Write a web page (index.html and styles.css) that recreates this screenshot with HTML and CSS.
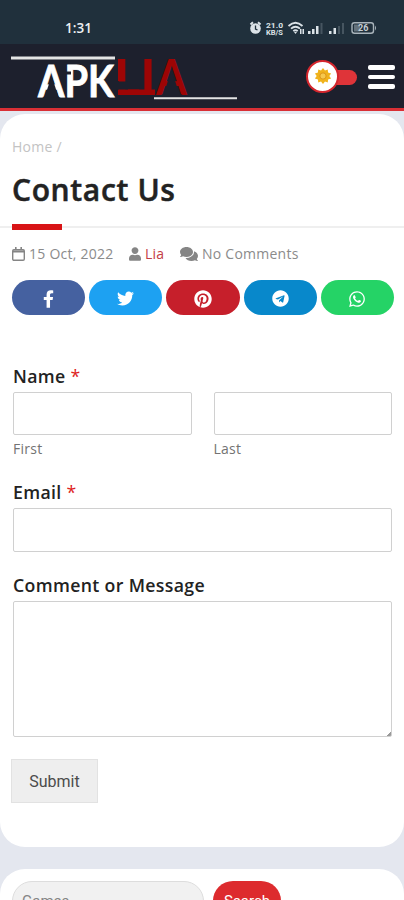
FILE: index.html
```html
<!DOCTYPE html>
<html lang="en">
<head>
<meta charset="utf-8">
<meta name="viewport" content="width=device-width, initial-scale=1">
<title>Contact Us</title>
<link rel="stylesheet" href="styles.css">
</head>
<body>
<div class="status">
  <span class="time">1:31</span>
  <svg class="status-icons" viewBox="0 0 132 16" width="132" height="16">
    <g fill="#dce3e8">
      <path d="M1.500 4.500 4 2.300M11.500 4.500 9 2.300" stroke="#dce3e8" stroke-width="2"/>
      <circle cx="6.500" cy="8.500" r="5.300"/>
      <path d="M6.500 5.500V9l2 1" fill="none" stroke="#20303c" stroke-width="1.300"/>
      <text x="17" y="7.500" class="speed" textLength="17" lengthAdjust="spacingAndGlyphs">21.0</text>
      <text x="17" y="15" class="speed" textLength="17" lengthAdjust="spacingAndGlyphs">KB/S</text>
      <path d="M39.500 6Q46.500-.5 53.500 6M42 8.700q4.500-4 9 0M44.300 11.200q2.200-2 4.400 0" fill="none" stroke="#dce3e8" stroke-width="1.800"/>
      <path d="m45 12 1.500 2 1.500-2zM51 9h1.500v5H51zM53.500 9H55v5h-1.500z"/>
      <path d="M59 11h2.500v3H59zM63 9h2.500v5H63zM67 6h2.500v8H67zM80 11h2.500v3H80zM84.500 8h2.500v6h-2.500z"/>
      <path fill="#465560" d="M71.500 3h2v11h-2zM89 6h2v8h-2zM93 3h2v11h-2z"/>
    </g>
    <rect x="103" y="2.700" width="21.500" height="10.600" rx="2.500" fill="none" stroke="#a9b4bb" stroke-width="1.400"/>
    <rect x="105" y="4.500" width="6" height="7" fill="#64727c"/>
    <path d="M126 5.500q2 2.500 0 5z" fill="#a9b4bb"/>
    <text x="109" y="11.300" class="battery">26</text>
  </svg>
</div>
<header class="header">
  <svg class="logo" viewBox="0 0 240 60" width="240" height="60" role="img" aria-label="APK LIA">
    <path d="M11 11h104" stroke="#e4e4e4" stroke-width="3"/>
    <text x="38" y="49.500" class="logo-text" textLength="76" lengthAdjust="spacingAndGlyphs">APK</text>
    <path d="M44.500 50.500 51.600 29 58.700 50.500z" fill="#1d202d"/>
    <path d="M62 24.500h9v3h-9z" fill="#1d202d"/>
    <g fill="#9d0505">
      <text x="115" y="48" class="logo-tall" textLength="25" lengthAdjust="spacingAndGlyphs">L</text>
      <text x="141" y="48" class="logo-tall" textLength="14" lengthAdjust="spacingAndGlyphs">I</text>
      <text x="156" y="48" class="logo-tall" textLength="31" lengthAdjust="spacingAndGlyphs">A</text>
      <path d="M118 12h7v22h-7zM144.500 12h7v32h-7zM118 42.500h37V48h-37z"/>
    </g>
    <path d="M116 34.500h12v8h-12z" fill="#1d202d"/>
    <path d="M163 49 171.500 23 180 49z" fill="#1d202d"/>
    <path d="M154 51.300h83" stroke="#e4e4e4" stroke-width="2"/>
  </svg>
  <div class="actions">
    <div class="switch">
      <span class="knob">
        <svg viewBox="-10 -10 20 20" width="18" height="18">
          <path fill="#f0b21b" d="M0-9 2.200-6 5.300-7.300 5.600-4 9-2.900 7 0 9 2.900 5.600 4 5.300 7.300 2.200 6 0 9-2.200 6-5.300 7.300-5.600 4-9 2.900-7 0-9-2.900-5.600-4-5.300-7.300-2.200-6z"/>
          <circle r="3.500" fill="#f6c84d" stroke="#d99013"/>
        </svg>
      </span>
    </div>
    <div class="menu"><i></i><i></i><i></i></div>
  </div>
</header>
<main class="card">
  <nav class="crumbs">Home /</nav>
  <h1>Contact Us</h1>
  <div class="rule"></div>
  <div class="meta">
    <span class="date"><svg viewBox="0 0 13 14" width="13" height="14" fill="none" stroke="#858585"><rect x=".7" y="2.700" width="11.600" height="10.600" rx="1.200" stroke-width="1.400"/><path d="M1 4.500h11" stroke-width="2"/><path d="M3.800 0v3M9.200 0v3" stroke-width="1.600"/></svg><b>15 Oct, 2022</b></span>
    <span class="author"><svg viewBox="0 0 448 512" width="12" height="14"><path d="M224 256c70.700 0 128-57.300 128-128S294.700 0 224 0 96 57.300 96 128s57.300 128 128 128zm89.600 32h-16.700c-22.200 10.200-46.900 16-72.900 16s-50.600-5.800-72.900-16h-16.700C60.200 288 0 348.200 0 422.400V464c0 26.500 21.500 48 48 48h352c26.500 0 48-21.500 48-48v-41.600c0-74.200-60.200-134.400-134.400-134.400z"/></svg><b>Lia</b></span>
    <span class="comments"><svg viewBox="0 0 576 512" width="18" height="16"><path d="M416 192c0-88.400-93.100-160-208-160S0 103.600 0 192c0 34.300 14.100 65.900 38 92-13.400 30.200-35.500 54.200-35.800 54.500-2.200 2.300-2.800 5.700-1.500 8.700S4.800 352 8 352c36.600 0 66.900-12.300 88.700-25 32.200 15.700 70.300 25 111.300 25 114.900 0 208-71.600 208-160zm122 220c23.900-26 38-57.700 38-92 0-66.900-53.500-124.200-129.300-148.100.9 6.600 1.300 13.300 1.300 20.100 0 105.900-107.700 192-240 192-10.800 0-21.300-.8-31.700-1.900C207.800 439.600 281.800 480 368 480c41 0 79.100-9.200 111.300-25 21.800 12.700 52.100 25 88.700 25 3.200 0 6.100-1.900 7.300-4.800 1.300-2.900.7-6.300-1.500-8.700-.3-.3-22.400-24.200-35.800-54.500z"/></svg><b>No Comments</b></span>
  </div>
  <div class="share">
    <a class="facebook"><svg viewBox="0 0 320 512" width="11" height="18"><path d="M279.140 288l14.220-92.660h-88.910v-60.130c0-25.350 12.420-50.060 52.240-50.060h40.420V6.260S260.430 0 225.360 0c-73.220 0-121.080 44.380-121.080 124.720v70.620H22.890V288h81.390v224h100.170V288z"/></svg></a>
    <a class="twitter"><svg viewBox="0 0 512 512" width="17" height="17"><path d="M459.370 151.716c.325 4.548.325 9.097.325 13.645 0 138.720-105.583 298.558-298.558 298.558-59.452 0-114.680-17.219-161.137-47.106 8.447.974 16.568 1.299 25.340 1.299 49.055 0 94.213-16.568 130.274-44.832-46.132-.975-84.792-31.188-98.112-72.772 6.498.974 12.995 1.624 19.818 1.624 9.421 0 18.843-1.300 27.614-3.573-48.081-9.747-84.143-51.980-84.143-102.985v-1.299c13.969 7.797 30.214 12.670 47.431 13.319-28.264-18.843-46.781-51.005-46.781-87.391 0-19.492 5.197-37.360 14.294-52.954 51.655 63.675 129.300 105.258 216.365 109.807-1.624-7.797-2.599-15.918-2.599-24.040 0-57.828 46.782-104.934 104.934-104.934 30.213 0 57.502 12.670 76.670 33.137 23.715-4.548 46.456-13.320 66.599-25.340-7.798 24.366-24.366 44.833-46.132 57.827 21.117-2.273 41.584-8.122 60.426-16.243-14.292 20.791-32.161 39.308-52.628 54.253z"/></svg></a>
    <a class="pinterest"><svg viewBox="0 0 496 512" width="18" height="18"><path d="M496 256c0 137-111 248-248 248-25.600 0-50.200-3.900-73.400-11.100 10.100-16.500 25.200-43.500 30.800-65 3-11.600 15.400-59 15.400-59 8.100 15.400 31.700 28.500 56.800 28.500 74.800 0 128.700-68.800 128.700-154.300 0-81.900-66.900-143.200-152.900-143.200-107 0-163.900 71.800-163.900 150.100 0 36.400 19.400 81.700 50.300 96.100 4.700 2.200 7.200 1.200 8.300-3.300.8-3.400 5-20.300 6.900-28.100.6-2.500.3-4.700-1.700-7.100-10.100-12.500-18.300-35.300-18.300-56.600 0-54.700 41.400-107.600 112-107.600 60.900 0 103.600 41.500 103.600 100.900 0 67.100-33.900 113.600-78 113.600-24.300 0-42.600-20.100-36.700-44.800 7-29.500 20.500-61.300 20.500-82.600 0-19-10.200-34.900-31.400-34.900-24.900 0-44.900 25.700-44.900 60.200 0 22 7.400 36.800 7.400 36.800s-24.500 103.800-29 123.200c-5 21.400-3 51.600-.9 71.200C65.400 450.900 0 361.100 0 256 0 119 111 8 248 8s248 111 248 248z"/></svg></a>
    <a class="telegram"><svg viewBox="0 0 496 512" width="17" height="17"><path d="M248 8C111 8 0 119 0 256s111 248 248 248 248-111 248-248S385 8 248 8zm121.800 169.900l-40.700 191.800c-3 13.600-11.100 16.900-22.400 10.500l-62-45.700-29.900 28.800c-3.300 3.300-6.100 6.100-12.500 6.100l4.400-63.100 114.900-103.800c5-4.400-1.100-6.900-7.700-2.500l-142 89.400-61.200-19.100c-13.300-4.200-13.600-13.300 2.800-19.700l239.100-92.200c11.100-4 20.800 2.700 17.200 19.500z"/></svg></a>
    <a class="whatsapp"><svg viewBox="0 0 448 512" width="16" height="18"><path d="M380.900 97.100C339 55.100 283.200 32 223.900 32c-122.400 0-222 99.600-222 222 0 39.100 10.200 77.300 29.600 111L0 480l117.700-30.900c32.400 17.700 68.900 27 106.100 27h.1c122.300 0 224.100-99.600 224.100-222 0-59.300-25.200-115-67.100-157zm-157 341.600c-33.200 0-65.700-8.900-94-25.700l-6.700-4-69.800 18.300L72 359.200l-4.400-7c-18.500-29.400-28.200-63.300-28.200-98.200 0-101.700 82.800-184.500 184.600-184.500 49.300 0 95.600 19.200 130.400 54.100 34.800 34.900 56.200 81.200 56.100 130.500 0 101.800-84.900 184.600-186.600 184.600zm101.200-138.200c-5.500-2.800-32.800-16.200-37.900-18-5.100-1.900-8.800-2.800-12.500 2.800-3.700 5.600-14.300 18-17.600 21.800-3.200 3.700-6.500 4.200-12 1.400-32.600-16.300-54-29.100-75.500-66-5.700-9.800 5.700-9.100 16.300-30.300 1.800-3.700.9-6.900-.5-9.700-1.400-2.800-12.500-30.100-17.100-41.200-4.500-10.800-9.100-9.300-12.500-9.500-3.200-.2-6.900-.2-10.600-.2-3.700 0-9.700 1.400-14.800 6.900-5.100 5.600-19.400 19-19.400 46.300 0 27.300 19.900 53.700 22.600 57.400 2.800 3.700 39.100 59.700 94.800 83.800 35.200 15.200 49 16.500 66.600 13.900 10.700-1.600 32.800-13.400 37.400-26.400 4.600-13 4.600-24.100 3.200-26.400-1.300-2.500-5-3.900-10.500-6.600z"/></svg></a>
  </div>
  <form>
    <div class="label">Name <em>*</em></div>
    <div class="names">
      <label><input type="text"><span>First</span></label>
      <label><input type="text"><span>Last</span></label>
    </div>
    <div class="label email">Email <em>*</em></div>
    <input type="email">
    <div class="label message">Comment or Message</div>
    <textarea></textarea>
    <button type="button" class="submit">Submit</button>
  </form>
</main>
<section class="card search">
  <div class="field">Games...</div>
  <div class="go">Search</div>
</section>
</body>
</html>
```
FILE: styles.css
```css
* { box-sizing: border-box; }
html, body { height: 900px; overflow: hidden; }
body { margin: 0; background: #e4e7ef; font-family: "Open Sans", sans-serif; color: #222; }
svg { display: block; flex: none; }

.status { height: 44px; padding: 12px 24px 0 65px; display: flex; justify-content: space-between; background: #20303c; }
.time { font: 600 13.5px/32px "Open Sans", sans-serif; color: #eef1f3; }
.status-icons { margin-top: 8px; margin-right: -1px; }
.speed { font: 700 8px "Roboto", sans-serif; }
.battery { font: 700 9px "Roboto", sans-serif; fill: #c5cdd2; }

.header { height: 67px; display: flex; justify-content: space-between; background: #1d202d; border-bottom: 3px solid #d92f35; }
.logo { margin-top: 3px; }
.logo-text { font: 700 43px "Lato", sans-serif; fill: #fff; stroke: #fff; stroke-width: .8px; }
.logo-tall { font: 700 50px "Lato", sans-serif; }
.actions { display: flex; align-items: center; gap: 11px; padding-right: 9px; }
.switch { width: 51px; height: 15px; display: flex; align-items: center; background: linear-gradient(90deg, transparent 20px, #df3439 20px); border-radius: 8px; margin-top: 3px; }
.knob { width: 33px; height: 33px; flex: none; display: flex; align-items: center; justify-content: center; background: #fff; border: 2px solid #d5262d; border-radius: 50%; margin-top: -3px; }
.menu { display: flex; flex-direction: column; gap: 5px; margin-top: 2px; }
.menu i { width: 27px; height: 4.500px; background: #fff; border-radius: 2px; }

.card { background: #fff; border-radius: 25px; margin-top: 3px; height: 733px; padding: 23px 12px 0; }
.crumbs { font-size: 14px; line-height: 20px; color: #c3c3c3; letter-spacing: .25px; }
h1 { margin: 11px 0 0; font-size: 30px; line-height: 43px; font-weight: 600; letter-spacing: .65px; -webkit-text-stroke: .5px #222; }
.rule { height: 6px; margin: 13px -12px 0; padding-left: 12px; background: linear-gradient(#efefef, #efefef) 0 2px / 100% 2px no-repeat; }
.rule::before { content: ""; display: block; width: 50px; height: 6px; background: #d81416; }
.meta { display: flex; height: 20px; margin-top: 14px; font-size: 14px; line-height: 20px; letter-spacing: .25px; color: #8b8b8b; fill: #858585; }
.meta span { display: flex; align-items: center; gap: 4px; }
.meta b { font-weight: 400; white-space: nowrap; }
.date { width: 117px; }
.author { width: 51px; }
.author b { color: #c33c45; }
.share { display: grid; grid-template-columns: repeat(5, 1fr); gap: 4px; height: 35px; margin: 16px -2px 0 0; }
.share a { display: flex; align-items: center; justify-content: center; border-radius: 18px; padding-top: 2px; fill: #fff; }
.facebook { background: #4561a0; }
.twitter { background: #1da1f2; }
.pinterest { background: #c61f2b; }
.telegram { background: #0888cb; }
.whatsapp { background: #25d366; }

form { padding: 49px 0 0 1px; }
.label { font-size: 17.700px; line-height: 24px; font-weight: 600; height: 28px; letter-spacing: .35px; }
.label em { font-style: normal; font-weight: 400; color: #dd2222; }
input, textarea { display: block; width: 100%; height: 43px; margin: 0; padding: 8px; border: 1px solid #d0d0d0; border-radius: 2px; background: #fff; font: inherit; }
.names { display: grid; grid-template-columns: 1fr 1fr; gap: 22px; }
.names span { display: block; margin-top: 4px; font-size: 14px; line-height: 20px; letter-spacing: .25px; color: #737373; }
.email { margin-top: 21px; }
.email + input { height: 44px; }
.message { margin-top: 21px; }
textarea { height: 136px; resize: none; background: linear-gradient(135deg, #fff 50%, #999 50%) right bottom / 4px 4px no-repeat; }
.submit { margin: 22px 0 0 -2px; width: 87px; height: 44px; border: 1px solid #e2e2e2; background: #eee; color: #4b4b4b; font: 16px "Roboto", sans-serif; }

.search { margin-top: 22px; height: 31px; border-radius: 25px 25px 0 0; overflow: hidden; padding-top: 12px; display: flex; gap: 9px; }
.field { width: 192px; height: 40px; border-radius: 20px; border: 1px solid #ddd; background: #f1f1f1; padding-left: 9px; font: 15px/38px "Roboto", sans-serif; color: #858585; }
.go { width: 68px; height: 40px; border-radius: 20px; background: #dd2b2e; color: #fff; text-align: center; font: 15px/40px "Roboto", sans-serif; }
```
